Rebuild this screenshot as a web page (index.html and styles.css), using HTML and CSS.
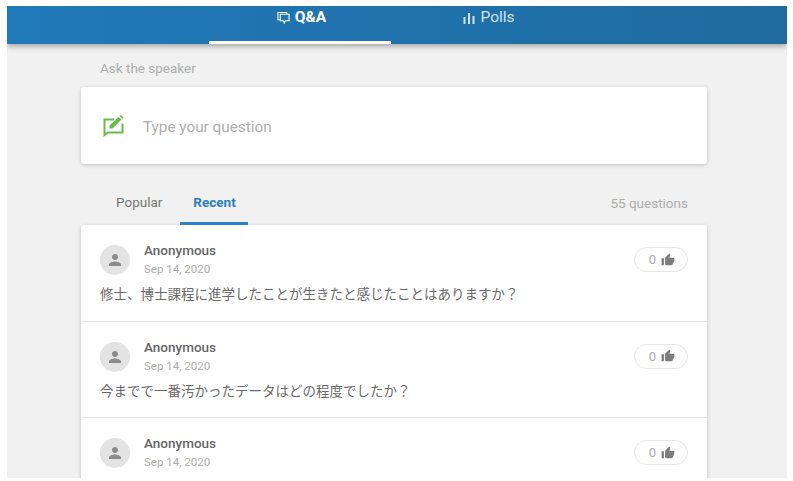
FILE: index.html

```html
<!DOCTYPE html>
<html lang="en">
  <head>
    <meta charset="utf-8">
    <meta name="viewport" content="width=device-width, initial-scale=1">
    <title>Q&amp;A</title>
    <link rel="stylesheet" href="styles.css">
  </head>

  <body>
    <div class="app">
      <header class="top_bar">
        <a class="top_tab active">
          <svg class="top_icon" viewBox="0 0 14 14">
            <path d="M3 9.5H1V1.5H10.5V3" fill="none" stroke="currentColor" stroke-width="1.1"/>
            <path d="M3.5 3.5H13V10.5H9L7.8 12.8L6.8 10.5H3.5Z" fill="none" stroke="currentColor" stroke-width="1.2"/>
          </svg>
          Q&amp;A
        </a>
        <a class="top_tab polls">
          <svg class="top_icon" viewBox="0 0 12 12">
            <rect x="0.5" y="5" width="2" height="7"/>
            <rect x="5" y="1" width="2" height="11"/>
            <rect x="9.5" y="4" width="2" height="8"/>
          </svg>
          Polls
        </a>
      </header>

      <main class="column">
        <div class="ask_label">Ask the speaker</div>

        <div class="ask_card">
          <svg class="ask_icon" viewBox="0 0 21 22">
            <path d="M11 4.5H1.5V20L5 17.5H19.5V8.5" fill="none" stroke="#68bd4a" stroke-width="2"/>
            <path d="M6.5 13.5V10.5L15.5 2L18.5 4.5L9.5 13.5Z" fill="#68bd4a"/>
            <path d="M16.5 1L18 0L20.5 2.5L19.5 3.8Z" fill="#68bd4a"/>
          </svg>
          <span class="ask_text">Type your question</span>
        </div>

        <div class="sort_row">
          <a class="sort_tab">Popular</a>
          <a class="sort_tab active">Recent</a>
          <span class="count">55 questions</span>
        </div>

        <div class="list">
          <div class="question">
            <div class="question_head">
              <div class="avatar">
                <svg viewBox="0 0 24 24"><path d="M12 12c2.21 0 4-1.79 4-4s-1.79-4-4-4-4 1.79-4 4 1.79 4 4 4zm0 2c-2.67 0-8 1.34-8 4v2h16v-2c0-2.66-5.33-4-8-4z"/></svg>
              </div>
              <div class="who">
                <div class="name">Anonymous</div>
                <div class="date">Sep 14, 2020</div>
              </div>
              <div class="like">
                <span>0</span>
                <svg viewBox="0 0 24 24"><path d="M1 21h4V9H1v12zm22-11c0-1.1-.9-2-2-2h-6.31l.95-4.57.03-.32c0-.41-.17-.79-.44-1.06L14.17 1 7.59 7.59C7.22 7.95 7 8.45 7 9v10c0 1.1.9 2 2 2h9c.83 0 1.54-.5 1.84-1.22l3.02-7.05c.09-.23.14-.47.14-.73v-2z"/></svg>
              </div>
            </div>
            <p class="body_text">修士、博士課程に進学したことが生きたと感じたことはありますか？</p>
          </div>

          <div class="question">
            <div class="question_head">
              <div class="avatar">
                <svg viewBox="0 0 24 24"><path d="M12 12c2.21 0 4-1.79 4-4s-1.79-4-4-4-4 1.79-4 4 1.79 4 4 4zm0 2c-2.67 0-8 1.34-8 4v2h16v-2c0-2.66-5.33-4-8-4z"/></svg>
              </div>
              <div class="who">
                <div class="name">Anonymous</div>
                <div class="date">Sep 14, 2020</div>
              </div>
              <div class="like">
                <span>0</span>
                <svg viewBox="0 0 24 24"><path d="M1 21h4V9H1v12zm22-11c0-1.1-.9-2-2-2h-6.31l.95-4.57.03-.32c0-.41-.17-.79-.44-1.06L14.17 1 7.59 7.59C7.22 7.95 7 8.45 7 9v10c0 1.1.9 2 2 2h9c.83 0 1.54-.5 1.84-1.22l3.02-7.05c.09-.23.14-.47.14-.73v-2z"/></svg>
              </div>
            </div>
            <p class="body_text">今までで一番汚かったデータはどの程度でしたか？</p>
          </div>

          <div class="question">
            <div class="question_head">
              <div class="avatar">
                <svg viewBox="0 0 24 24"><path d="M12 12c2.21 0 4-1.79 4-4s-1.79-4-4-4-4 1.79-4 4 1.79 4 4 4zm0 2c-2.67 0-8 1.34-8 4v2h16v-2c0-2.66-5.33-4-8-4z"/></svg>
              </div>
              <div class="who">
                <div class="name">Anonymous</div>
                <div class="date">Sep 14, 2020</div>
              </div>
              <div class="like">
                <span>0</span>
                <svg viewBox="0 0 24 24"><path d="M1 21h4V9H1v12zm22-11c0-1.1-.9-2-2-2h-6.31l.95-4.57.03-.32c0-.41-.17-.79-.44-1.06L14.17 1 7.59 7.59C7.22 7.95 7 8.45 7 9v10c0 1.1.9 2 2 2h9c.83 0 1.54-.5 1.84-1.22l3.02-7.05c.09-.23.14-.47.14-.73v-2z"/></svg>
              </div>
            </div>
          </div>
        </div>
      </main>
    </div>
  </body>
</html>
```

FILE: styles.css

```css
html, body {
  height: 100%;
  margin: 0;
  background-color: #fff;
  overflow: hidden;
}

body {
  padding: 6px 6px 3px 7px;
  box-sizing: border-box;
  font-family: Roboto, "Noto Sans CJK JP", sans-serif;
}

.app {
  height: 100%;
  background-color: #f1f1f1;
  overflow: hidden;
}

.top_bar {
  height: 38px;
  padding-left: 202px;
  display: flex;
  background: linear-gradient(90deg, #2079b9, #1f6b9f);
  box-shadow: 0 2px 6px rgba(0, 0, 0, 0.35);
  position: relative;
}

.top_tab {
  width: 182px;
  height: 22px;
  display: flex;
  justify-content: center;
  align-items: center;
  gap: 5px;
  font-size: 15.5px;
  color: #cfe3f1;
}

.top_tab.active {
  padding: 0 0 13px 3px;
  box-sizing: border-box;
  height: 38px;
  border-bottom: 3px solid #fff;
  color: #fff;
  font-weight: 700;
}

.top_tab.polls {
  width: 196px;
}

.top_icon {
  width: 13px;
  height: 13px;
  fill: currentColor;
}

.polls .top_icon {
  width: 12px;
  height: 12px;
  margin-top: 2px;
}

.column {
  width: 626px;
  margin-left: 74px;
}

.ask_label {
  padding: 16px 0 0 19px;
  height: 27px;
  font-size: 13.5px;
  line-height: 17px;
  color: #adadad;
}

.ask_card {
  height: 77px;
  padding-left: 22px;
  display: flex;
  align-items: center;
  gap: 19px;
  background-color: #fff;
  border-radius: 3px;
  box-shadow: 0 1px 4px rgba(0, 0, 0, 0.2);
}

.ask_icon {
  width: 21px;
  height: 22px;
  margin-top: 1px;
}

.ask_text {
  margin-top: 2px;
  font-size: 15.3px;
  color: #aeaeae;
}

.sort_row {
  height: 61px;
  display: flex;
  align-items: flex-end;
  font-size: 13.5px;
}

.sort_tab {
  height: 39px;
  box-sizing: border-box;
  padding: 8px 12px 0;
  margin-left: 23px;
  color: #757575;
}

.sort_tab.active {
  margin-left: 6px;
  padding: 8px 12.5px 0 13px;
  border-bottom: 3px solid #2a82c9;
  color: #2a7fc4;
  font-weight: 700;
}

.count {
  margin-left: auto;
  padding: 0 19px 14px 0;
  color: #adadad;
}

.list {
  background-color: #fff;
  border-radius: 3px 3px 0 0;
  box-shadow: 0 1px 4px rgba(0, 0, 0, 0.2);
}

.question {
  height: 96.5px;
  box-sizing: border-box;
  padding: 20px 19px 0 19px;
  border-bottom: 1px solid #e4e4e4;
}

.question_head {
  display: flex;
  align-items: flex-start;
}

.avatar {
  width: 30px;
  height: 30px;
  border-radius: 50%;
  background-color: #e3e3e3;
  display: flex;
  align-items: center;
  justify-content: center;
}

.avatar svg {
  width: 18px;
  height: 18px;
  fill: #8a8a8a;
}

.who {
  margin-left: 14px;
  flex: 1;
  margin-top: -3px;
}

.name {
  font-size: 13.5px;
  line-height: 17px;
  font-weight: 500;
  color: #666;
}

.date {
  margin-top: 3px;
  font-size: 11.5px;
  line-height: 15px;
  color: #adadad;
}

.like {
  width: 54px;
  height: 25px;
  margin-top: 2px;
  padding-left: 2px;
  box-sizing: border-box;
  border: 1px solid #e6e6e6;
  border-radius: 13px;
  display: flex;
  align-items: center;
  justify-content: center;
  gap: 5px;
  font-size: 13px;
  color: #adadad;
}

.like svg {
  width: 14px;
  height: 14px;
  fill: #7d7d7d;
}

.body_text {
  margin: 7px 0 0;
  font-size: 13.5px;
  line-height: 20px;
  color: #6a6a6a;
}
```
